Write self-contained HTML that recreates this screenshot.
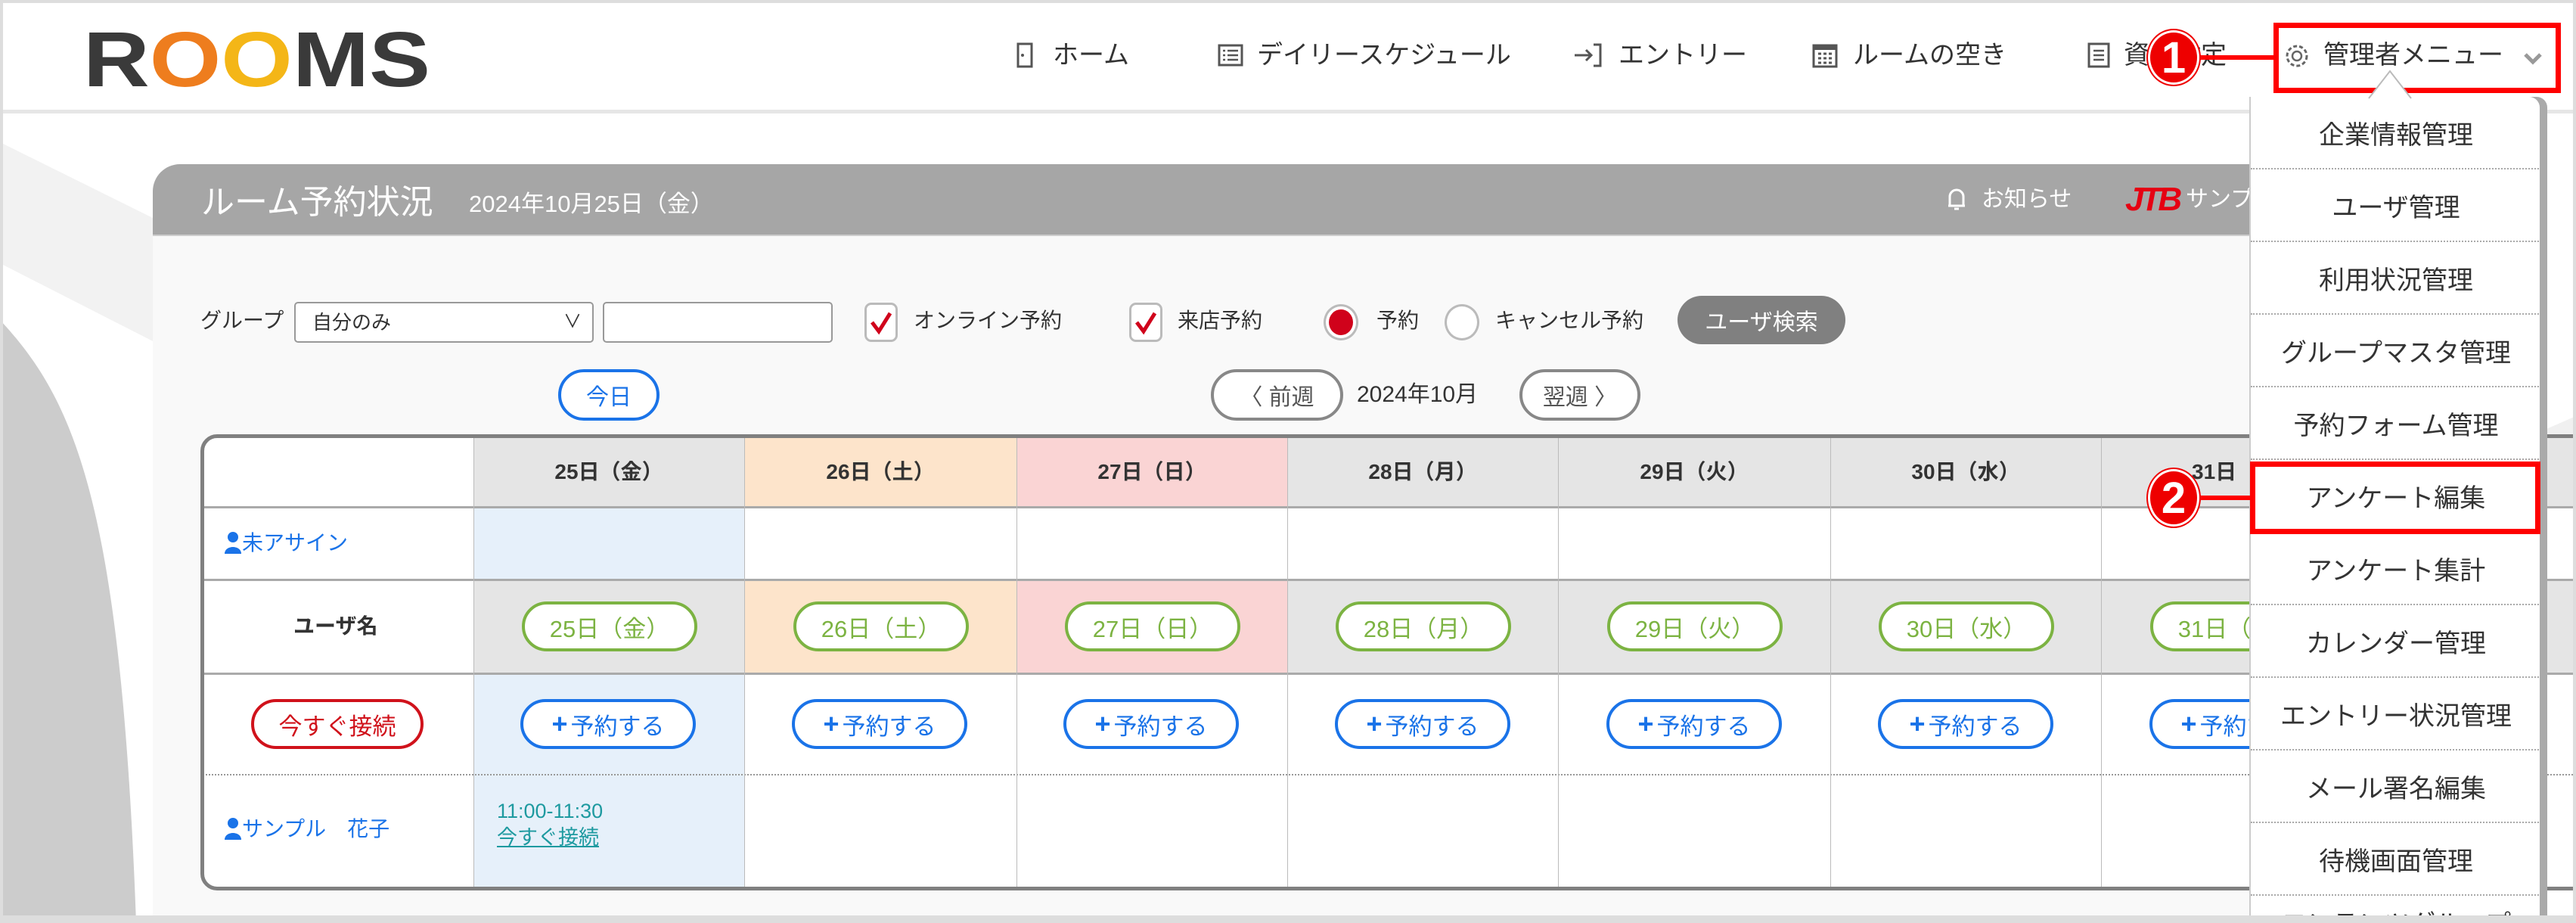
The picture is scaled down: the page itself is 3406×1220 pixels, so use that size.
<!DOCTYPE html>
<html style="width:3406px;height:1220px;overflow:hidden"><head><meta charset="utf-8">
<style>
*{margin:0;padding:0;box-sizing:border-box}
body{width:3406px;height:1220px;position:relative;overflow:hidden;background:#fff;font-family:"Liberation Sans","Noto Sans CJK JP",sans-serif;color:#333}
#w{position:absolute;left:0;top:0;width:3406px;height:1220px;overflow:hidden}
.a{position:absolute}
.nav{position:absolute;top:50px;font-size:34px;color:#333;white-space:nowrap;line-height:46px}
.pill{position:absolute;height:66px;width:232px;border-radius:33px;border:4px solid;background:#fff;font-size:31px;display:flex;align-items:center;justify-content:center}
.g{border-color:#7cb342;color:#7cb342}
.b{border-color:#1a73e8;color:#1a73e8}
.cell{position:absolute}
.hd{font-weight:bold;font-size:28px;color:#333;display:flex;align-items:center;justify-content:center}
.mi{position:absolute;left:0;width:384px;height:96px;font-size:34px;display:flex;align-items:center;justify-content:center;border-bottom:2px dotted #aaa;color:#333}
</style></head><body><div id="w">
<svg class="a" style="left:0;top:150px" width="3406" height="1070">
<polygon points="0,38 210,142 210,305 0,198" fill="#f2f2f2"/>
<path d="M0,273 C100,380 160,520 180,1070 L0,1070 Z" fill="#cccccc"/>
<polygon points="3360,420 3406,400 3406,560 3360,580" fill="#f0f0f0"/>
</svg>
<div class="a" style="left:0;top:0;width:3406px;height:150px;background:#fff;border-bottom:5px solid #e6e6e6"></div>
<div class="a" style="left:0;top:0;width:3406px;height:1220px;border:4px solid #ddd;pointer-events:none;z-index:20"></div>
<div class="a" style="left:110px;top:26px;font-size:98px;font-weight:900;letter-spacing:0px;line-height:100px;color:#3a3a3a;transform:scaleX(1.24) scaleY(1.05);transform-origin:left top">R<span style="color:#ee7d1e">O</span><span style="color:#f4b617">O</span>MS</div>
<svg class="a" style="left:1344px;top:56px" width="22" height="34"><rect x="2" y="2" width="18" height="30" fill="none" stroke="#555" stroke-width="3"/><circle cx="8" cy="17" r="2" fill="#555"/></svg>
<div class="nav" style="left:1392px">ホーム</div>
<svg class="a" style="left:1610px;top:58px" width="34" height="30"><rect x="2" y="2" width="30" height="26" fill="none" stroke="#555" stroke-width="3"/><path d="M7 9h3M7 15h3M7 21h3M13 9h14M13 15h14M13 21h14" stroke="#555" stroke-width="2.5"/></svg>
<div class="nav" style="left:1662px">デイリースケジュール</div>
<svg class="a" style="left:2080px;top:56px" width="40" height="34"><path d="M2 17h22M17 10l7 7-7 7" fill="none" stroke="#555" stroke-width="3"/><path d="M27 3h9v28h-9" fill="none" stroke="#555" stroke-width="3"/></svg>
<div class="nav" style="left:2140px">エントリー</div>
<svg class="a" style="left:2396px;top:54px" width="34" height="36"><rect x="2" y="6" width="30" height="28" fill="none" stroke="#555" stroke-width="3"/><rect x="2" y="6" width="30" height="6" fill="#555"/><path d="M8 17h4M15 17h4M22 17h4M8 23h4M15 23h4M22 23h4M8 29h4M15 29h4M22 29h4" stroke="#555" stroke-width="3"/></svg>
<div class="nav" style="left:2450px">ルームの空き</div>
<svg class="a" style="left:2760px;top:56px" width="30" height="34"><rect x="2" y="2" width="26" height="30" fill="none" stroke="#555" stroke-width="3"/><path d="M8 11h14M8 17h14M8 23h14" stroke="#555" stroke-width="2.5"/></svg>
<div class="nav" style="left:2808px">資料設定</div>
<div class="a" style="left:3006px;top:30px;width:380px;height:93px;border:7px solid #f00;background:#fff"></div>
<svg class="a" style="left:3020px;top:57px" width="34" height="34"><circle cx="17" cy="17" r="6" fill="none" stroke="#666" stroke-width="2.5"/><circle cx="17" cy="17" r="13" fill="none" stroke="#666" stroke-width="3" stroke-dasharray="5 3"/></svg>
<div class="nav" style="left:3072px">管理者メニュー</div>
<svg class="a" style="left:3336px;top:68px" width="26" height="20"><path d="M3 4l10 10 10-10" fill="none" stroke="#999" stroke-width="5"/></svg>
<div class="a" style="left:2900px;top:73px;width:110px;height:6px;background:#f00"></div>
<div class="a" style="left:2840px;top:40px;width:68px;height:72px;border-radius:50%;background:#e00;color:#fff;font-weight:bold;font-size:58px;display:flex;align-items:center;justify-content:center;border:3px solid #fff;box-shadow:0 0 0 2px #e00">1</div>
<div class="a" style="left:202px;top:217px;width:3160px;height:1000px;background:#f9f9f9;border-top-left-radius:36px;overflow:hidden">
<div class="a" style="left:0;top:0;width:100%;height:95px;background:#a6a6a6;border-bottom:2px solid #ccc"></div>
</div>
<div class="a" style="left:266px;top:238px;font-size:44px;color:#fff;line-height:60px">ルーム予約状況</div>
<div class="a" style="left:620px;top:250px;font-size:31px;color:#fff;line-height:40px">2024年10月25日（金）</div>
<svg class="a" style="left:2574px;top:246px" width="26" height="34"><path d="M4 26V14a9 9 0 0 1 18 0v12zM2 26h22M10 30h6" fill="none" stroke="#fff" stroke-width="3"/></svg>
<div class="a" style="left:2620px;top:244px;font-size:30px;color:#fff;line-height:40px">お知らせ</div>
<div class="a" style="left:2810px;top:240px;font-size:44px;font-weight:900;font-style:italic;color:#e60012;line-height:48px;letter-spacing:-4px">JTB</div>
<div class="a" style="left:2890px;top:244px;font-size:30px;color:#fff;line-height:40px">サンプ</div>
<div class="a" style="left:265px;top:404px;font-size:28px;line-height:40px">グループ</div>
<div class="a" style="left:389px;top:399px;width:396px;height:54px;border:2px solid #999;border-radius:5px;background:#fff;font-size:26px;line-height:50px;padding-left:22px">自分のみ<span style="position:absolute;right:14px;top:0;font-size:24px">∨</span></div>
<div class="a" style="left:797px;top:399px;width:304px;height:54px;border:2px solid #999;border-radius:5px;background:#fff"></div>
<div class="a" style="left:1143px;top:400px;width:44px;height:52px;border:3px solid #bbb;border-radius:9px;background:#fff"></div>
<svg class="a" style="left:1150px;top:410px" width="30" height="34"><path d="M3 16l9 12L27 4" fill="none" stroke="#d0021b" stroke-width="5"/></svg>
<div class="a" style="left:1208px;top:404px;font-size:28px;line-height:40px">オンライン予約</div>
<div class="a" style="left:1493px;top:400px;width:44px;height:52px;border:3px solid #bbb;border-radius:9px;background:#fff"></div>
<svg class="a" style="left:1500px;top:410px" width="30" height="34"><path d="M3 16l9 12L27 4" fill="none" stroke="#d0021b" stroke-width="5"/></svg>
<div class="a" style="left:1557px;top:404px;font-size:28px;line-height:40px">来店予約</div>
<div class="a" style="left:1750px;top:402px;width:46px;height:48px;border:3px solid #bbb;border-radius:50%;background:#fff"></div>
<div class="a" style="left:1757px;top:409px;width:32px;height:34px;border-radius:50%;background:#d0021b"></div>
<div class="a" style="left:1820px;top:404px;font-size:28px;line-height:40px">予約</div>
<div class="a" style="left:1910px;top:402px;width:46px;height:48px;border:3px solid #bbb;border-radius:50%;background:#fff"></div>
<div class="a" style="left:1977px;top:404px;font-size:28px;line-height:40px">キャンセル予約</div>
<div class="a" style="left:2218px;top:391px;width:222px;height:64px;border-radius:32px;background:#808080;color:#fff;font-size:30px;display:flex;align-items:center;justify-content:center">ユーザ検索</div>
<div class="a" style="left:738px;top:488px;width:134px;height:68px;border:4px solid #1a73e8;border-radius:34px;background:#fff;color:#1a73e8;font-size:30px;display:flex;align-items:center;justify-content:center">今日</div>
<div class="a" style="left:1601px;top:488px;width:175px;height:68px;border:4px solid #888;border-radius:34px;background:#fff;color:#555;font-size:30px;display:flex;align-items:center;justify-content:center">〈 前週</div>
<div class="a" style="left:1794px;top:502px;font-size:30px;line-height:40px">2024年10月</div>
<div class="a" style="left:2009px;top:488px;width:160px;height:68px;border:4px solid #888;border-radius:34px;background:#fff;color:#555;font-size:30px;display:flex;align-items:center;justify-content:center">翌週 〉</div>
<div class="a" style="left:265px;top:574px;width:3160px;height:603px;border:5px solid #808080;border-radius:22px;background:#fff;overflow:hidden">
<div style="position:absolute;left:-5px;top:-5px;width:3160px;height:603px">
<div class="cell hd" style="left:361px;top:0;width:358px;height:96px;background:#e5e5e5">25日（金）</div>
<div class="cell hd" style="left:719px;top:0;width:360px;height:96px;background:#fde4cb">26日（土）</div>
<div class="cell hd" style="left:1079px;top:0;width:358px;height:96px;background:#fad4d4">27日（日）</div>
<div class="cell hd" style="left:1437px;top:0;width:358px;height:96px;background:#e5e5e5">28日（月）</div>
<div class="cell hd" style="left:1795px;top:0;width:360px;height:96px;background:#e5e5e5">29日（火）</div>
<div class="cell hd" style="left:2155px;top:0;width:358px;height:96px;background:#e5e5e5">30日（水）</div>
<div class="cell hd" style="left:2513px;top:0;width:647px;height:96px;background:#e5e5e5;justify-content:flex-start;padding-left:120px">31日（木）</div>
<div class="cell" style="left:361px;top:96px;width:358px;height:96px;background:#e6f0fa"></div>
<div class="cell" style="left:361px;top:192px;width:358px;height:124px;background:#e5e5e5"></div>
<div class="cell" style="left:719px;top:192px;width:360px;height:124px;background:#fde4cb"></div>
<div class="cell" style="left:1079px;top:192px;width:358px;height:124px;background:#fad4d4"></div>
<div class="cell" style="left:1437px;top:192px;width:1723px;height:124px;background:#e5e5e5"></div>
<div class="cell" style="left:361px;top:316px;width:358px;height:287px;background:#e6f0fa"></div>
<div class="cell" style="left:0;top:95px;width:3160px;height:3px;background:#aaa"></div>
<div class="cell" style="left:0;top:191px;width:3160px;height:3px;background:#aaa"></div>
<div class="cell" style="left:0;top:315px;width:3160px;height:3px;background:#aaa"></div>
<div class="cell" style="left:0;top:449px;width:3160px;height:0;border-top:2px dotted #999"></div>
<div class="cell" style="left:361px;top:0;width:1px;height:603px;background:#bbb"></div>
<div class="cell" style="left:719px;top:0;width:1px;height:603px;background:#bbb"></div>
<div class="cell" style="left:1079px;top:0;width:1px;height:603px;background:#bbb"></div>
<div class="cell" style="left:1437px;top:0;width:1px;height:603px;background:#bbb"></div>
<div class="cell" style="left:1795px;top:0;width:1px;height:603px;background:#bbb"></div>
<div class="cell" style="left:2155px;top:0;width:1px;height:603px;background:#bbb"></div>
<div class="cell" style="left:2513px;top:0;width:1px;height:603px;background:#bbb"></div>
</div></div>
<svg class="a" style="left:296px;top:702px" width="24" height="30"><circle cx="12" cy="8" r="7" fill="#1a73e8"/><path d="M1 30c0-12 22-12 22 0z" fill="#1a73e8"/></svg>
<div class="a" style="left:320px;top:698px;font-size:28px;color:#1a73e8;line-height:40px">未アサイン</div>
<div class="a" style="left:388px;top:808px;font-size:28px;font-weight:bold;line-height:40px">ユーザ名</div>
<div class="pill g" style="left:690px;top:795px">25日（金）</div>
<div class="pill g" style="left:1049px;top:795px">26日（土）</div>
<div class="pill g" style="left:1408px;top:795px">27日（日）</div>
<div class="pill g" style="left:1766px;top:795px">28日（月）</div>
<div class="pill g" style="left:2125px;top:795px">29日（火）</div>
<div class="pill g" style="left:2484px;top:795px">30日（水）</div>
<div class="pill g" style="left:2843px;top:795px">31日（木）</div>
<div class="pill" style="left:332px;top:924px;width:228px;border-color:#d0121b;color:#d0121b">今すぐ接続</div>
<div class="pill b" style="left:688px;top:924px"><b style="font-size:36px;margin-right:4px">+</b>予約する</div>
<div class="pill b" style="left:1047px;top:924px"><b style="font-size:36px;margin-right:4px">+</b>予約する</div>
<div class="pill b" style="left:1406px;top:924px"><b style="font-size:36px;margin-right:4px">+</b>予約する</div>
<div class="pill b" style="left:1765px;top:924px"><b style="font-size:36px;margin-right:4px">+</b>予約する</div>
<div class="pill b" style="left:2124px;top:924px"><b style="font-size:36px;margin-right:4px">+</b>予約する</div>
<div class="pill b" style="left:2483px;top:924px"><b style="font-size:36px;margin-right:4px">+</b>予約する</div>
<div class="pill b" style="left:2842px;top:924px"><b style="font-size:36px;margin-right:4px">+</b>予約する</div>
<svg class="a" style="left:296px;top:1080px" width="24" height="30"><circle cx="12" cy="8" r="7" fill="#1a73e8"/><path d="M1 30c0-12 22-12 22 0z" fill="#1a73e8"/></svg>
<div class="a" style="left:320px;top:1076px;font-size:28px;color:#1a73e8;line-height:40px">サンプル　花子</div>
<div class="a" style="left:657px;top:1054px;font-size:27px;color:#1e9aa0;line-height:36px">11:00-11:30</div>
<div class="a" style="left:657px;top:1089px;font-size:27px;color:#1e9aa0;line-height:36px;text-decoration:underline">今すぐ接続</div>
<div class="a" style="left:2974px;top:128px;width:394px;height:1082px;background:#aaa;border-top-right-radius:14px"></div>
<div class="a" style="left:2974px;top:128px;width:384px;height:1082px;background:#fff;border-left:2px solid #ccc;border-top-right-radius:14px;overflow:hidden">
<div class="mi" style="top:0">企業情報管理</div>
<div class="mi" style="top:96px">ユーザ管理</div>
<div class="mi" style="top:192px">利用状況管理</div>
<div class="mi" style="top:288px">グループマスタ管理</div>
<div class="mi" style="top:384px">予約フォーム管理</div>
<div class="mi" style="top:480px">アンケート編集</div>
<div class="mi" style="top:576px">アンケート集計</div>
<div class="mi" style="top:672px">カレンダー管理</div>
<div class="mi" style="top:768px">エントリー状況管理</div>
<div class="mi" style="top:864px">メール署名編集</div>
<div class="mi" style="top:960px">待機画面管理</div>
<div class="mi" style="top:1056px;align-items:flex-start;padding-top:10px">コンテンツグループ</div>
</div>
<svg class="a" style="left:3130px;top:92px" width="60" height="40"><path d="M2 38L30 2 58 38" fill="#fff" stroke="#bbb" stroke-width="2"/></svg>
<div class="a" style="left:2975px;top:610px;width:384px;height:96px;border:7px solid #f00"></div>
<div class="a" style="left:2900px;top:655px;width:78px;height:6px;background:#f00"></div>
<div class="a" style="left:2840px;top:620px;width:68px;height:76px;border-radius:50%;background:#e00;color:#fff;font-weight:bold;font-size:58px;display:flex;align-items:center;justify-content:center;border:3px solid #fff;box-shadow:0 0 0 2px #e00">2</div>
<div class="a" style="left:0;top:1210px;width:3406px;height:10px;background:#ddd"></div>
</div></body></html>
